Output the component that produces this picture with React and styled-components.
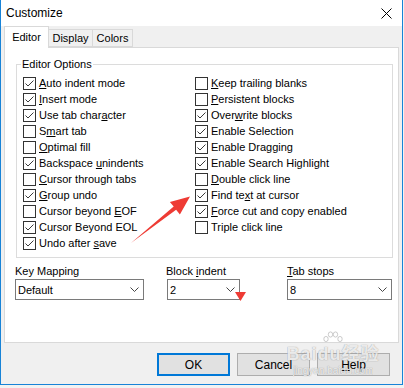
import React from "react";
import styled, { createGlobalStyle } from "styled-components";

const GlobalStyle = createGlobalStyle`
  html, body {
    margin: 0;
    padding: 0;
    background: #f2f2f2;
  }
  body {
    font-family: "Liberation Sans", Arial, sans-serif;
    font-size: 11px;
    color: #000;
  }
`;

const Stage = styled.div`
  position: relative;
  width: 404px;
  height: 388px;
  overflow: hidden;
`;

const Window = styled.div`
  width: 403px;
  height: 385px;
  box-sizing: border-box;
  border: 1px solid #1883d7;
  border-top: none;
  background: #f0f0f0;
  display: flex;
  flex-direction: column;
`;

const TitleBar = styled.div`
  height: 26px;
  flex: none;
  background: #fff;
  display: flex;
  align-items: center;
  justify-content: space-between;
  padding: 0 10px 0 5px;
  font-size: 12px;
`;

const Body = styled.div`
  padding: 0 3px;
  display: flex;
  flex-direction: column;
`;

const TabStrip = styled.div`
  height: 21px;
  display: flex;
  align-items: flex-end;
`;

const Tab = styled.div`
  position: relative;
  box-sizing: border-box;
  width: ${(p) => p.$w}px;
  height: ${(p) => (p.$active ? 22 : 18)}px;
  margin-bottom: ${(p) => (p.$active ? -1 : 0)}px;
  background: ${(p) => (p.$active ? "#fff" : "#f0f0f0")};
  border: 1px solid #d9d9d9;
  border-bottom: ${(p) => (p.$active ? "none" : "1px solid #d9d9d9")};
  border-left: ${(p) => (p.$first ? "1px solid #d9d9d9" : "none")};
  z-index: ${(p) => (p.$active ? 1 : 0)};
  display: flex;
  align-items: center;
  justify-content: center;
  padding-bottom: ${(p) => (p.$active ? 1 : 0)}px;
`;

const Panel = styled.div`
  box-sizing: border-box;
  height: 296px;
  background: #fff;
  border: 1px solid #d9d9d9;
  padding: 16px 0 0 11px;
`;

const Group = styled.div`
  position: relative;
  box-sizing: border-box;
  width: 377px;
  height: 194px;
  border: 1px solid #dcdcdc;
  padding: 10px 0 0 6px;
  display: flex;
`;

const Legend = styled.span`
  position: absolute;
  top: -7px;
  left: 4px;
  padding: 0 1px;
  background: #fff;
  line-height: 13px;
`;

const Column = styled.div`
  width: ${(p) => p.$w}px;
  display: flex;
  flex-direction: column;
`;

const Row = styled.div`
  height: 16px;
  display: flex;
  align-items: center;
  gap: 3px;
  white-space: nowrap;
`;

const Box = styled.span`
  box-sizing: border-box;
  width: 13px;
  height: 13px;
  flex: none;
  border: 1px solid #333;
  background: #fff;
  display: flex;
`;

const Key = styled.span`
  text-decoration: underline;
  text-underline-offset: 1px;
`;

const Fields = styled.div`
  display: grid;
  grid-template-columns: 152px 120px 105px;
  margin: 6px 0 0 -1px;
`;

const Field = styled.div`
  display: flex;
  flex-direction: column;
  gap: 1px;
`;

const FieldLabel = styled.div`
  height: 14px;
  line-height: 14px;
  margin-left: ${(p) => p.$shift || 0}px;
`;

const Combo = styled.div`
  box-sizing: border-box;
  width: ${(p) => p.$w}px;
  height: 21px;
  border: 1px solid #7a7a7a;
  background: #fff;
  display: flex;
  align-items: center;
  justify-content: space-between;
  padding: 0 4px 0 2px;
`;

const ButtonRow = styled.div`
  display: flex;
  justify-content: flex-end;
  gap: 7px;
  margin-top: 10px;
  padding-right: 9px;
`;

const Button = styled.div`
  box-sizing: border-box;
  width: 73px;
  height: 23px;
  background: #e1e1e1;
  border: ${(p) => (p.$primary ? "2px solid #0078d7" : "1px solid #adadad")};
  display: flex;
  align-items: center;
  justify-content: center;
  font-size: 12px;
`;

/* baidu watermark sits on top of the dialog, as in the screenshot */
const Watermark = styled.div`
  position: absolute;
  left: 287px;
  top: 331px;
  width: 92px;
  display: flex;
  flex-direction: column;
  align-items: center;
  color: rgba(255, 255, 255, 0.8);
  text-shadow: 0 0 1px rgba(130, 130, 130, 0.5), 0 0 1px rgba(130, 130, 130, 0.5);
  pointer-events: none;
`;

const MarkLine = styled.div`
  font-family: "Liberation Sans", "Noto Sans CJK SC", sans-serif;
  font-size: ${(p) => p.$size}px;
  font-weight: ${(p) => (p.$bold ? 700 : 400)};
  height: ${(p) => p.$h}px;
  line-height: ${(p) => p.$h}px;
  letter-spacing: ${(p) => p.$spacing || 0}px;
  white-space: nowrap;
  overflow: hidden;
`;

const Overlay = styled.svg`
  position: absolute;
  left: 0;
  top: 0;
  pointer-events: none;
`;

const Label = ({ text }) => {
  const i = text.indexOf("&");
  if (i < 0) return <span>{text}</span>;
  return (
    <span>
      {text.slice(0, i)}
      <Key>{text[i + 1]}</Key>
      {text.slice(i + 2)}
    </span>
  );
};

const Check = ({ on, text }) => (
  <Row>
    <Box>
      {on && (
        <svg width="11" height="11" viewBox="0 0 11 11">
          <polyline points="1.5,5.5 4,8 9.5,2.5" fill="none" stroke="#3a3a3a" strokeWidth="1" />
        </svg>
      )}
    </Box>
    <Label text={text} />
  </Row>
);

const Chevron = () => (
  <svg width="9" height="5" viewBox="0 0 9 5">
    <polyline points="0.5,0.5 4.5,4.5 8.5,0.5" fill="none" stroke="#444" strokeWidth="1" />
  </svg>
);

const Paw = () => (
  <svg width="22" height="13" viewBox="0 0 22 13">
    <g fill="rgba(255,255,255,0.85)" stroke="rgba(140,140,140,0.55)" strokeWidth="0.8">
      <ellipse cx="4" cy="8" rx="2.2" ry="2.6" />
      <ellipse cx="8.5" cy="3.5" rx="2.2" ry="2.6" />
      <ellipse cx="13.5" cy="3.5" rx="2.2" ry="2.6" />
      <ellipse cx="18" cy="8" rx="2.2" ry="2.6" />
    </g>
  </svg>
);

const left = [
  ["&Auto indent mode", true],
  ["&Insert mode", true],
  ["Use tab char&acter", true],
  ["S&mart tab", false],
  ["&Optimal fill", false],
  ["Backspace &unindents", true],
  ["&Cursor through tabs", false],
  ["&Group undo", true],
  ["Cursor beyond &EOF", false],
  ["Cursor Beyond EOL", true],
  ["Undo after &save", true],
];

const right = [
  ["&Keep trailing blanks", false],
  ["&Persistent blocks", false],
  ["Over&write blocks", true],
  ["Enable Selection", true],
  ["Enable Dragging", true],
  ["Enable Search Highlight", true],
  ["&Double click line", false],
  ["Find te&xt at cursor", true],
  ["&Force cut and copy enabled", true],
  ["Triple click line", false],
];

export default function App() {
  return (
    <Stage>
      <GlobalStyle />
      <Window>
        <TitleBar>
          <span>Customize</span>
          <svg width="11" height="11" viewBox="0 0 11 11">
            <path d="M0.5 0.5 L10.5 10.5 M10.5 0.5 L0.5 10.5" stroke="#000" strokeWidth="1" />
          </svg>
        </TitleBar>
        <Body>
          <TabStrip>
            <Tab $w={45} $active $first>Editor</Tab>
            <Tab $w={44}>Display</Tab>
            <Tab $w={40}>Colors</Tab>
          </TabStrip>
          <Panel>
            <Group>
              <Legend>Editor Options</Legend>
              <Column $w={172}>
                {left.map(([t, on]) => (
                  <Check key={t} text={t} on={on} />
                ))}
              </Column>
              <Column $w={190}>
                {right.map(([t, on]) => (
                  <Check key={t} text={t} on={on} />
                ))}
              </Column>
            </Group>
            <Fields>
              <Field>
                <FieldLabel>Key Mapping</FieldLabel>
                <Combo $w={129}>
                  <span>Default</span>
                  <Chevron />
                </Combo>
              </Field>
              <Field>
                <FieldLabel $shift={-1}>
                  <Label text="Block &indent" />
                </FieldLabel>
                <Combo $w={73}>
                  <span>2</span>
                  <Chevron />
                </Combo>
              </Field>
              <Field>
                <FieldLabel>
                  <Label text="&Tab stops" />
                </FieldLabel>
                <Combo $w={105}>
                  <span>8</span>
                  <Chevron />
                </Combo>
              </Field>
            </Fields>
          </Panel>
          <ButtonRow>
            <Button $primary>OK</Button>
            <Button>Cancel</Button>
            <Button>
              <Label text="&Help" />
            </Button>
          </ButtonRow>
        </Body>
      </Window>

      <Watermark>
        <Paw />
        <MarkLine $size={18} $h={21} $bold $spacing={1}>Baidu经验</MarkLine>
        <MarkLine $size={10} $h={12}>jingyan.baidu.com</MarkLine>
      </Watermark>

      <Overlay width="404" height="388" viewBox="0 0 404 388">
        <polygon
          points="131,243 176.1,209.8 179.9,214.5 190,196.5 169.9,201.9 173.7,206.6"
          fill="#ee3b34"
        />
        <polygon points="235,292 246,292 240.5,301" fill="#ee3b34" />
      </Overlay>
    </Stage>
  );
}
